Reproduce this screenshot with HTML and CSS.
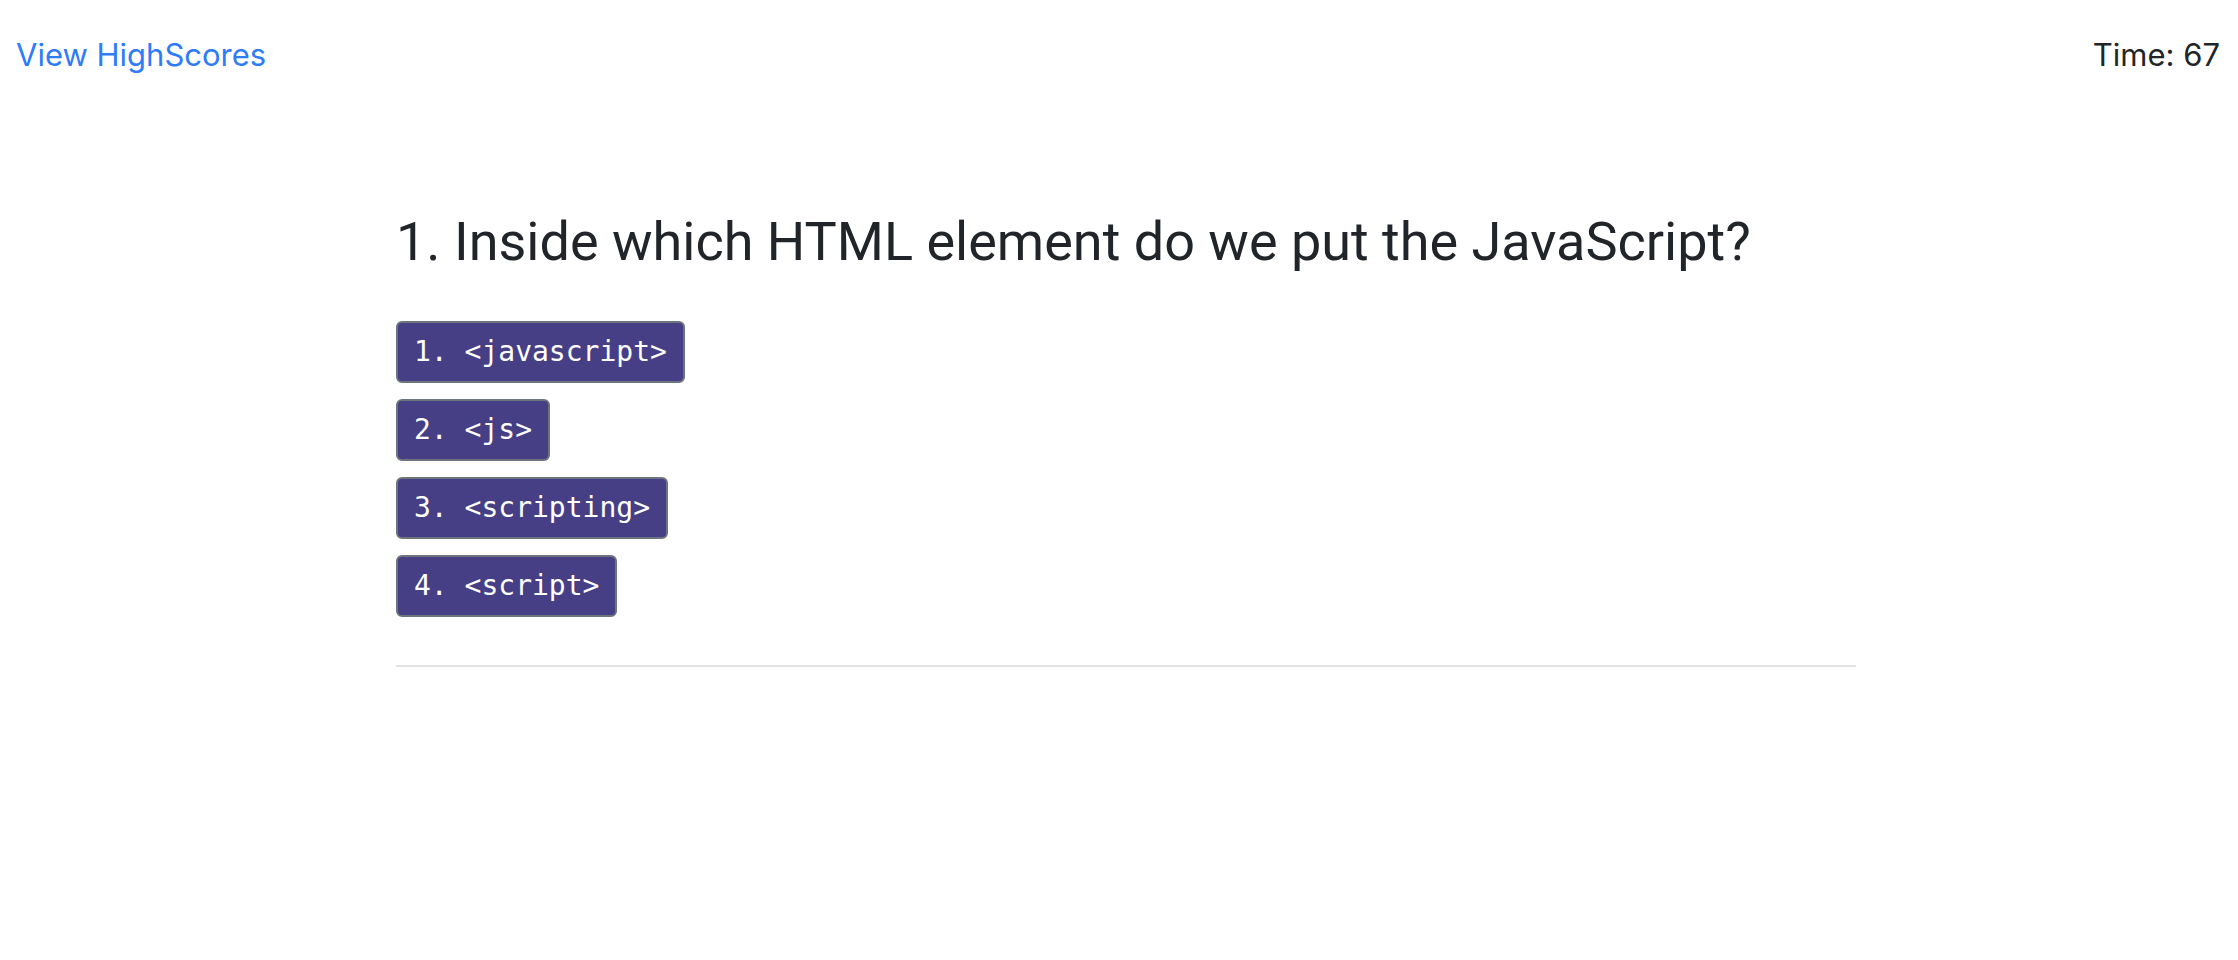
FILE: index.html
```html
<!DOCTYPE html>
<html lang="en">
<head>
<meta charset="utf-8">
<title>Code Quiz</title>
<link rel="stylesheet" href="styles.css">
</head>
<body>
<header class="topbar">
<a class="scores-link" href="#highscores">View HighScores</a>
<div class="timer">Time: <span>67</span></div>
</header>
<main class="page">
<section class="quiz">
<h1 class="question">1. Inside which HTML element do we put the JavaScript?</h1>
<div class="choices">
<button class="choice" type="button">1. &lt;javascript&gt;</button>
<button class="choice" type="button">2. &lt;js&gt;</button>
<button class="choice" type="button">3. &lt;scripting&gt;</button>
<button class="choice" type="button">4. &lt;script&gt;</button>
</div>
<hr class="divider">
</section>
</main>
</body>
</html>
```
FILE: styles.css
```css
* { box-sizing: border-box; }
body {
  margin: 0;
  background: #fff;
  color: #212529;
  font-family: Inter, "Liberation Sans", sans-serif;
  font-size: 31px;
  line-height: 48px;
}
.topbar {
  display: flex;
  justify-content: space-between;
  padding: 31px 18px 0 16px;
}
.scores-link { color: #2f7cf8; text-decoration: none; }
.page { padding: 129px 0 0 14px; }
.quiz {
  max-width: 1460px;
  margin: 0 auto;
}
.question {
  margin: 0 0 45px;
  font-family: Roboto, sans-serif;
  font-size: 54px;
  font-weight: 400;
  line-height: 68px;
}
.choices {
  display: flex;
  flex-direction: column;
  align-items: flex-start;
  gap: 16px;
}
.choice {
  padding: 6px 16px;
  border: 2px solid #6c757d;
  border-radius: 6px;
  background: #463f85;
  color: #fff;
  font-family: "DejaVu Sans Mono", monospace;
  font-size: 28px;
  line-height: 46px;
}
.divider {
  margin: 48px 0 0;
  border: 0;
  border-top: 2px solid #e3e3e3;
}
```
